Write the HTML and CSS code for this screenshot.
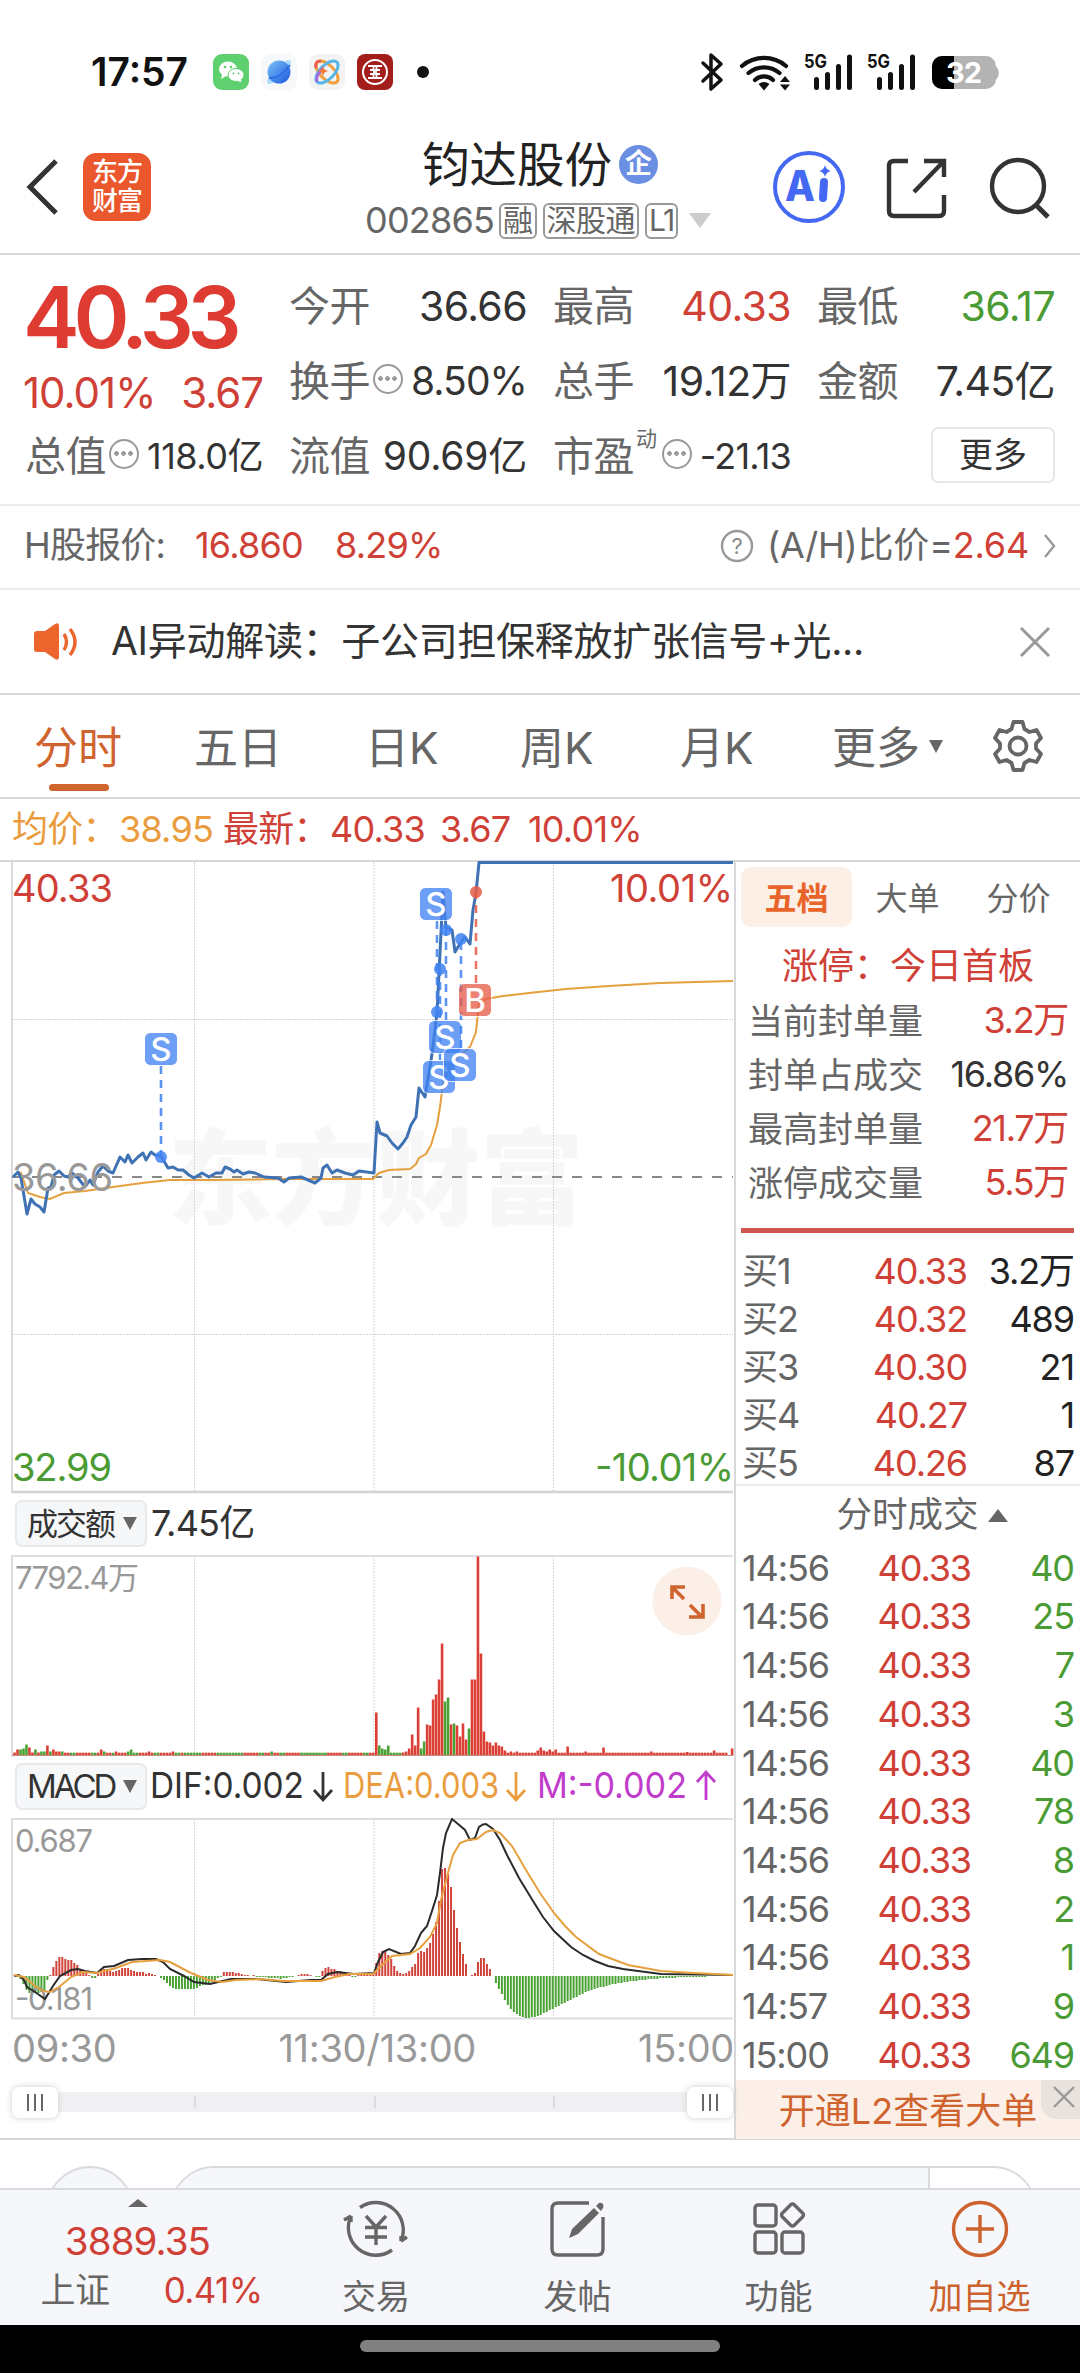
FILE: index.html
```html
<!DOCTYPE html>
<html lang="zh-CN">
<head>
    <meta charset="UTF-8">
    <meta name="viewport" content="width=device-width, initial-scale=1.0">
    <title>钧达股份 002865</title>
    <link rel="stylesheet" href="styles.css">
</head>
<body>
    <!-- Status bar -->
    <div class="status-bar">
        <span class="time">17:57</span>
        <svg class="app-icon" viewBox="0 0 36 36">
            <rect width="36" height="36" rx="9" fill="#5fd070"/>
            <ellipse cx="15" cy="15" rx="9" ry="7.5" fill="#fff"/>
            <path d="M9 20l-1 5 5-3z" fill="#fff"/>
            <ellipse cx="23" cy="21" rx="8" ry="6.5" fill="#fff" stroke="#5fd070" stroke-width="1"/>
            <path d="M27 25l2 3-5-1z" fill="#fff"/>
            <g fill="#5fd070"><circle cx="12" cy="13" r="1.3"/><circle cx="18" cy="13" r="1.3"/><circle cx="20.500" cy="19.500" r="1"/><circle cx="25.500" cy="19.500" r="1"/></g>
        </svg>
        <svg class="app-icon" viewBox="0 0 36 36">
            <defs><linearGradient id="planet" x1="0" y1="0" x2="1" y2="1"><stop offset="0" stop-color="#7cc6fb"/><stop offset="1" stop-color="#1c55d8"/></linearGradient></defs>
            <rect width="36" height="36" rx="9" fill="#f7f8fa"/>
            <ellipse cx="18" cy="18" rx="16" ry="5" transform="rotate(-45 18 18)" fill="#a9dcfb"/>
            <circle cx="18" cy="18" r="11.500" fill="url(#planet)"/>
            <path d="M8 24c8 1 16-6 21-13" stroke="#2a6fe5" stroke-width="2" fill="none"/>
        </svg>
        <svg class="app-icon" viewBox="0 0 36 36">
            <rect width="36" height="36" rx="9" fill="#f3f3f3"/>
            <g fill="none" stroke-width="3">
                <ellipse cx="18" cy="18" rx="14" ry="7" transform="rotate(45 18 18)" stroke="#f0a03a"/>
                <ellipse cx="18" cy="18" rx="14" ry="7" transform="rotate(-45 18 18)" stroke="#57b6e8"/>
                <path d="M7 14c-1-5 1-7 5-7" stroke="#ef5a50"/><path d="M8 28c-1-4 1-9 6-14" stroke="#a46be0"/>
            </g>
            <path d="M14 12l1.500 3.500L19 17l-3.500 1.500L14 22l-1.500-3.500L9 17l3.500-1.500z" fill="#ef7a3c"/>
        </svg>
        <svg class="app-icon" viewBox="0 0 36 36">
            <rect width="36" height="36" rx="8" fill="#a31d1b"/>
            <circle cx="18" cy="18" r="12" fill="none" stroke="#fff" stroke-width="2"/>
            <path d="M11 12h14M11 24h14M13 16h4v4h-4M23 16h-4v4h4M16.500 12v4M19.500 12v4M16.500 20v4M19.500 20v4" stroke="#fff" stroke-width="1.800" fill="none"/>
        </svg>
        <span class="dot"></span>
        <svg class="status-right" width="300" height="40" viewBox="0 0 300 40">
            <path d="M3 11l18 17-10 9V3l10 9L3 29" fill="none" stroke="#111" stroke-width="3.500" stroke-linejoin="round" stroke-linecap="round"/>
            <g fill="none" stroke="#111" stroke-width="4.200" stroke-linecap="round">
                <path d="M42 14a34 34 0 0 1 44 0"/><path d="M48.500 21a24 24 0 0 1 31 0"/><path d="M55 28a13 13 0 0 1 18 0"/>
            </g>
            <path d="M58.500 32a9 9 0 0 1 11 0l-5.500 6.500zM80 30l5-6 5 6zM80 32.500l5 6 5-6z" fill="#111"/>
            <g font-size="19" font-weight="700" fill="#111">
                <text x="104" y="16" textLength="23" lengthAdjust="spacingAndGlyphs">5G</text>
                <text x="167" y="16" textLength="23" lengthAdjust="spacingAndGlyphs">5G</text>
            </g>
            <g stroke="#111" stroke-width="5" stroke-linecap="round">
                <path d="M116.500 27.500v8M127.500 22.500v13M138.500 14.500v21M149.500 5v30.500"/>
                <path d="M179.500 27.500v8M190.500 22.500v13M201.500 14.500v21M212.500 5v30.500"/>
            </g>
            <rect x="232" y="4" width="64" height="33" rx="10" fill="#b3b3b3"/>
            <path d="M295 14c5 2 5 12 0 14z" fill="#b3b3b3"/>
            <path d="M254 4h-12a10 10 0 0 0-10 10v13a10 10 0 0 0 10 10h12z" fill="#000"/>
            <text x="246" y="31" font-size="29" font-weight="700" fill="#fff" textLength="36">32</text>
        </svg>
    </div>

    <!-- Header -->
    <div class="header">
        <svg class="back" width="36" height="60" viewBox="0 0 36 60"><path d="M31 4L5 30l26 26" fill="none" stroke="#333" stroke-width="5"/></svg>
        <div class="logo">东方<br>财富</div>
        <div class="title-box">
            <div class="title">钧达股份<span class="corp">企</span></div>
            <div class="subtitle"><span class="code">002865</span><span class="tag">融</span><span class="tag">深股通</span><span class="tag level">L1</span><i class="tri-down pale"></i></div>
        </div>
        <svg class="header-icons" width="290" height="76" viewBox="0 0 290 76">
            <circle cx="42" cy="38" r="34" fill="none" stroke="#4468f2" stroke-width="4"/>
            <text x="18" y="52" font-size="42" font-weight="800" fill="#4468f2" textLength="30" lengthAdjust="spacingAndGlyphs">A</text>
            <path d="M57 33l-1 16" stroke="#4468f2" stroke-width="8" stroke-linecap="round"/>
            <path d="M58 16q1 5 6 6-5 1-6 6-1-5-6-6 5-1 6-6z" fill="#4468f2"/>
            <path d="M141 12h-14q-5 0-5 5v45q0 5 5 5h45q5 0 5-5V46M177 28V12h-20M177 12l-30 31" fill="none" stroke="#333" stroke-width="4.400"/>
            <circle cx="251" cy="37" r="26" fill="none" stroke="#333" stroke-width="4.400"/>
            <path d="M269 56l12 12" stroke="#333" stroke-width="5"/>
        </svg>
    </div>

    <!-- Quote figures -->
    <div class="quote">
        <div class="col first">
            <div class="price">40.33</div>
            <div class="change"><span>10.01%</span><span>3.67</span></div>
            <div class="row small"><label>总值</label><i class="info"></i><b class="cap">118.0亿</b></div>
        </div>
        <div class="col">
            <div class="row"><label>今开</label><b>36.66</b></div>
            <div class="row mid"><label>换手</label><i class="info"></i><b>8.50%</b></div>
            <div class="row mid"><label>流值</label><b class="float">90.69亿</b></div>
        </div>
        <div class="col">
            <div class="row"><label>最高</label><b class="red">40.33</b></div>
            <div class="row"><label>总手</label><b>19.12万</b></div>
            <div class="row small"><label>市盈</label><sup>动</sup><i class="info"></i><b>-21.13</b></div>
        </div>
        <div class="col">
            <div class="row"><label>最低</label><b class="green">36.17</b></div>
            <div class="row"><label>金额</label><b>7.45亿</b></div>
            <div class="row"><button class="more">更多</button></div>
        </div>
    </div>

    <div class="h-share">
        <span class="h-label">H股报价:</span><span class="red h-price">16.860</span><span class="red">8.29%</span>
        <div class="ratio">
            <svg width="34" height="34" viewBox="0 0 34 34"><circle cx="17" cy="17" r="15" fill="none" stroke="#999" stroke-width="2.400"/><text x="17" y="25" text-anchor="middle" font-size="22" fill="#888">?</text></svg>
            <span>(A/H)比价=<em class="red">2.64</em></span>
            <svg width="12" height="24" viewBox="0 0 12 24"><path d="M1 1l9 11-9 11" fill="none" stroke="#999" stroke-width="2.400"/></svg>
        </div>
    </div>

    <div class="ai-news">
        <svg width="46" height="38" viewBox="0 0 46 38">
            <path d="M1 11q0-3 3-3h8L22 1q4-2 4 2v31q0 4-4 2l-10-7H4q-3 0-3-3z" fill="#ec652d"/>
            <path d="M31 11q5 8 0 16" fill="none" stroke="#ec652d" stroke-width="3.400"/><path d="M37 6q10 13 0 26" fill="none" stroke="#ec652d" stroke-width="3.400"/>
        </svg>
        <span class="news-text">AI异动解读：子公司担保释放扩张信号+光...</span>
        <svg width="32" height="32" viewBox="0 0 32 32"><path d="M2 2l28 28M30 2L2 30" stroke="#999" stroke-width="3"/></svg>
    </div>

    <!-- Period tabs -->
    <div class="tabs">
        <span class="tab active">分时</span>
        <span class="tab">五日</span>
        <span class="tab">日K</span>
        <span class="tab">周K</span>
        <span class="tab">月K</span>
        <span class="tab">更多<i class="tri-down tiny"></i></span>
        <svg class="gear" width="54" height="54" viewBox="0 0 54 54">
            <path d="M22.500 3h9l2 7 5 3 7-2 4.500 8-5 5.500v5l5 5.500-4.500 8-7-2-5 3-2 7h-9l-2-7-5-3-7 2L4 35l5-5.500v-5L4 19l4.500-8 7 2 5-3z" fill="none" stroke="#666" stroke-width="3.800" stroke-linejoin="round"/>
            <circle cx="27" cy="27" r="8.500" fill="none" stroke="#666" stroke-width="3.800"/>
        </svg>
    </div>

    <div class="legend">
        <span class="orange l1">均价：</span><span class="orange l2">38.95</span><span class="red l3">最新：</span><span class="red l4">40.33</span><span class="red l5">3.67</span><span class="red">10.01%</span>
    </div>

    <div class="main">
        <!-- Charts -->
        <div class="charts">
            <svg class="price-chart" width="735" height="634" viewBox="0 0 735 634">
                <text class="watermark" x="168" y="357" textLength="416">东方财富</text>
                <g class="grid">
                    <path d="M194.500 2v631M374 2v631M553.500 2v631M12 159.500h721M12 474.500h721"/>
                </g>
                <path d="M12 2v631" stroke="#d9d9de" stroke-width="2"/>
                <path d="M12 632h721" stroke="#d3d3d6" stroke-width="2.500"/>
                <path d="M12 317h721" stroke="#888" stroke-width="2" stroke-dasharray="10 10"/>
                <polyline class="avg" points="18,312 21,313 28,333 40,337 50,339 64,333 85,331 113,327 142,323 170,320 212,320 283,319 373,319 379,313 389,310 410,309 416,304 419,298 426,294 431,285 437,265 440,247 443,223 448,210 458,197 470,187 476,172 479,143 486,139 503,136 529,133 566,129 609,126 660,123 733,121"/>
                <polyline class="last" points="13,317 18,312 21,318 27,354 31,339 35,344 40,347 44,352 48,328 51,327 54,315 59,311 64,316 68,317 72,313 78,318 85,327 90,320 93,325 98,312 103,306 108,311 113,313 120,297 125,302 128,295 132,303 138,297 143,293 146,300 151,292 155,295 161,296 168,308 173,307 178,310 183,310 189,315 194,318 202,313 209,317 216,313 222,313 225,307 230,309 234,312 237,310 243,314 249,312 255,313 264,317 278,318 284,322 289,318 301,317 315,323 321,318 323,308 327,305 332,313 337,310 345,313 353,315 359,311 374,313 377,262 380,273 387,276 392,283 398,289 403,283 407,277 411,265 416,257 419,228 425,237 432,194 437,153 439,113 443,32 446,68 452,70 455,92 461,82 465,77 470,84 473,50 476,33 479,2.500 733,2.500"/>
                <g class="pins" id="pins"></g>
                <g font-size="38">
                    <text x="12" y="42" fill="#cf4036" textLength="101">40.33</text>
                    <text x="610" y="42" fill="#cf4036" textLength="123">10.01%</text>
                    <text x="12" y="331" fill="#999" textLength="101">36.66</text>
                    <text x="12" y="621" fill="#4b9b35" textLength="100">32.99</text>
                    <text x="595" y="621" fill="#4b9b35" textLength="139">-10.01%</text>
                </g>
            </svg>

            <div class="indicator">
                <span class="select">成交额<i class="tri-down"></i></span><span class="turnover">7.45亿</span>
            </div>

            <svg class="volume-chart" width="735" height="202" viewBox="0 0 735 202">
                <g class="grid"><path d="M194.500 1v200M374 1v200M553.500 1v200"/></g>
                <path d="M12 202V1h721" fill="none" stroke="#dedee2" stroke-width="2"/>
                <g id="volume"></g>
                <path d="M12 200.500h721" stroke="#c98b80"/>
                <text x="15" y="34" font-size="31" fill="#999" textLength="124">7792.4万</text>
                <circle cx="687" cy="46" r="34.500" fill="#fbefe7"/>
                <path d="M672 44V32h13M672 32l12 12M690 50l12 12M703 49v13h-14" fill="none" stroke="#d0642e" stroke-width="3.600"/>
            </svg>

            <div class="indicator macd">
                <span class="select">MACD<i class="tri-down"></i></span>
                <svg width="585" height="48" viewBox="0 0 585 48">
                    <g font-size="36">
                        <text x="3" y="35" fill="#333" textLength="154" lengthAdjust="spacingAndGlyphs">DIF:0.002</text>
                        <text x="196" y="35" fill="#e99d3e" textLength="156" lengthAdjust="spacingAndGlyphs">DEA:0.003</text>
                        <text x="390" y="35" fill="#c13ccb" textLength="150" lengthAdjust="spacingAndGlyphs">M:-0.002</text>
                    </g>
                    <g fill="none" stroke-width="2.800">
                        <path d="M176 9v27M167 27l9 10 9-10" stroke="#333"/>
                        <path d="M369 9v27M360 27l9 10 9-10" stroke="#e99d3e"/>
                        <path d="M559 37V10M550 19l9-10 9 10" stroke="#c13ccb"/>
                    </g>
                </svg>
            </div>

            <svg class="macd-chart" width="735" height="202" viewBox="0 0 735 202">
                <g class="grid"><path d="M194.500 1v200M374 1v200M553.500 1v200"/></g>
                <path d="M733 1H12v199.500h721" fill="none" stroke="#dedee2" stroke-width="2"/>
                <g id="macd"></g>
                <g font-size="31" fill="#999"><text x="15" y="34" textLength="78">0.687</text><text x="15" y="192" textLength="78">-0.181</text></g>
                <polyline class="dif" points="14,158 19,157 24,162 27,169 35,174 45,181 53,168 60,158 71,152 78,151 85,153 97,155 104,149 114,148 128,142 142,141 156,141 163,144 170,151 184,158 194,164 210,166 231,161 257,161 286,164 311,162 321,162 328,156 337,154 354,156 374,155 378,144 383,134 389,131 401,136 410,135 415,128 421,115 427,108 432,93 437,77 440,55 443,30 446,15 452,1 458,6 465,12 470,22 475,20 479,9 483,6.500 486,6 493,11 500,22 507,37 519,60 533,83 543,99 554,113 571,129 583,137 595,143 608,148 623,151 661,156 733,157"/>
                <polyline class="dea" points="14,157 24,159 35,168 43,173 50,174 59,169 71,159 83,154 97,155 116,150 132,144 160,142 170,144 189,154 208,162 222,164 236,162 260,161 283,163 321,163 335,159 349,156 373,156 380,149 392,138 410,136 420,130 430,119 437,105 441,82 448,55 453,37 460,25 468,22 477,21 486,14 493,12 500,15 512,28 526,52 540,75 554,95 565,108 576,119 599,136 628,147 661,153 694,155 733,157"/>
            </svg>

            <div class="time-axis"><span>09:30</span><span>11:30/13:00</span><span>15:00</span></div>

            <div class="slider">
                <span class="handle"><i></i><i></i><i></i></span>
                <div class="track"><i></i><i></i><i></i></div>
                <span class="handle"><i></i><i></i><i></i></span>
            </div>
        </div>

        <!-- Order book -->
        <div class="side">
            <div class="side-tabs"><span class="on">五档</span><span>大单</span><span>分价</span></div>
            <div class="limit-title">涨停：今日首板</div>
            <div class="stats">
                <div><span>当前封单量</span><b class="red">3.2万</b></div>
                <div><span>封单占成交</span><b>16.86%</b></div>
                <div><span>最高封单量</span><b class="red">21.7万</b></div>
                <div><span>涨停成交量</span><b class="red">5.5万</b></div>
            </div>
            <div class="split"></div>
            <div class="bids">
                <div class="line"><span>买1</span><span class="red">40.33</span><b>3.2万</b></div>
                <div class="line"><span>买2</span><span class="red">40.32</span><b>489</b></div>
                <div class="line"><span>买3</span><span class="red">40.30</span><b>21</b></div>
                <div class="line"><span>买4</span><span class="red">40.27</span><b>1</b></div>
                <div class="line"><span>买5</span><span class="red">40.26</span><b>87</b></div>
            </div>
            <div class="ticks-title">分时成交<i class="tri-up"></i></div>
            <div class="ticks">
                <div class="line"><span>14:56</span><span class="red">40.33</span><b class="green">40</b></div>
                <div class="line"><span>14:56</span><span class="red">40.33</span><b class="green">25</b></div>
                <div class="line"><span>14:56</span><span class="red">40.33</span><b class="green">7</b></div>
                <div class="line"><span>14:56</span><span class="red">40.33</span><b class="green">3</b></div>
                <div class="line"><span>14:56</span><span class="red">40.33</span><b class="green">40</b></div>
                <div class="line"><span>14:56</span><span class="red">40.33</span><b class="green">78</b></div>
                <div class="line"><span>14:56</span><span class="red">40.33</span><b class="green">8</b></div>
                <div class="line"><span>14:56</span><span class="red">40.33</span><b class="green">2</b></div>
                <div class="line"><span>14:56</span><span class="red">40.33</span><b class="green">1</b></div>
                <div class="line"><span>14:57</span><span class="red">40.33</span><b class="green">9</b></div>
                <div class="line"><span>15:00</span><span class="red">40.33</span><b class="green">649</b></div>
            </div>
            <div class="l2-banner">开通L2查看大单
                <span class="close"><svg width="24" height="24" viewBox="0 0 24 24"><path d="M2 2l20 20M22 2L2 22" stroke="#999" stroke-width="2.400"/></svg></span>
            </div>
        </div>
    </div>

    <!-- Top of the next section, cut by the bottom bar -->
    <div class="peek"><span class="avatar"></span><div class="pill"><span></span></div></div>

    <!-- Bottom bar -->
    <div class="bottom-bar">
        <div class="index">
            <i class="tri-up small"></i>
            <div class="points">3889.35</div>
            <div class="index-row"><span>上证</span><span class="red">0.41%</span></div>
        </div>
        <div class="nav">
            <svg width="66" height="62" viewBox="0 0 66 62">
                <g fill="none" stroke="#666" stroke-width="3.400">
                    <path d="M17 9.500A27.500 27.500 0 0 1 58 43v-5M58 43l6-4"/><path d="M49 52A27.500 27.500 0 0 1 8 18v6M8 18l-7 4"/>
                    <path d="M23 18l10 11 10-11M22 29.500h22M22 39h22M33 28v19"/>
                </g>
            </svg>
            <span>交易</span>
        </div>
        <div class="nav">
            <svg width="66" height="62" viewBox="0 0 66 62">
                <path d="M44 5H13q-6 0-6 6v40q0 6 6 6h39q6 0 6-6V19" fill="none" stroke="#666" stroke-width="3.400"/>
                <path d="M24 40l3-9L49 10l5 5-21 21zM51 8l3-3q2-1 4 1 1 2 0 4l-2 3z" fill="#666"/>
            </svg>
            <span>发帖</span>
        </div>
        <div class="nav">
            <svg width="66" height="62" viewBox="0 0 66 62">
                <g fill="none" stroke="#666" stroke-width="3.400">
                    <rect x="9" y="7" width="21" height="21" rx="3"/><rect x="9" y="34" width="21" height="21" rx="3"/><rect x="36" y="34" width="21" height="21" rx="3"/>
                    <rect x="38" y="8.500" width="17" height="17" rx="2.500" transform="rotate(45 46.500 17)"/>
                </g>
            </svg>
            <span>功能</span>
        </div>
        <div class="nav add">
            <svg width="66" height="62" viewBox="0 0 66 62">
                <g fill="none" stroke="#cc622e" stroke-width="3.400"><circle cx="33" cy="31" r="26.500"/><path d="M33 17v28M19 31h28"/></g>
            </svg>
            <span>加自选</span>
        </div>
    </div>
    <div class="home"><span></span></div>

    <script src="script.js"></script>
</body>
</html>
```

FILE: styles.css
```css
* {
    box-sizing: border-box;
}

body {
    margin: 0;
    width: 1080px;
    height: 2373px;
    overflow: hidden;
    background-color: #fff;
    color: #333;
    font-family: Inter, "Noto Sans CJK SC", sans-serif;
    line-height: 1.2;
    display: flex;
    flex-direction: column;
}

b, em, i {
    font-weight: normal;
    font-style: normal;
}

svg {
    display: block;
    flex: none;
}

svg text {
    font-family: Inter, "Noto Sans CJK SC", sans-serif;
}

.red { color: #cf4036; }
.green { color: #4b9b35; }
.orange { color: #e99d3e; }

.tri-down {
    display: inline-block;
    border-left: 7px solid transparent;
    border-right: 7px solid transparent;
    border-top: 13px solid #666;
}

.tri-up {
    display: inline-block;
    border-left: 10px solid transparent;
    border-right: 10px solid transparent;
    border-bottom: 13px solid #666;
}

/* Status bar */
.status-bar {
    height: 137px;
    padding: 7px 80px 0 91px;
    display: flex;
    align-items: center;
}

.time {
    width: 122px;
    font-size: 39px;
    font-weight: 600;
    color: #111;
}

.app-icon {
    width: 36px;
    height: 36px;
    margin-right: 12px;
}

.dot {
    width: 12px;
    height: 12px;
    margin-left: 12px;
    border-radius: 50%;
    background-color: #111;
}

.status-right {
    margin-left: auto;
}

/* Header */
.header {
    height: 118px;
    border-bottom: 2px solid #d8d8d8;
    display: flex;
    align-items: flex-start;
}

.back {
    margin: 20px 0 0 25px;
}

.logo {
    width: 68px;
    height: 68px;
    margin: 16px 0 0 22px;
    padding-top: 4px;
    border-radius: 13px;
    background-color: #ea572c;
    color: #fff;
    font-size: 26px;
    font-weight: 500;
    line-height: 29px;
    text-align: center;
    letter-spacing: -1px;
}

.title-box {
    width: 611px;
    padding-left: 214px;
}

.title {
    height: 55px;
    padding-left: 57px;
    display: flex;
    align-items: center;
    font-size: 47.5px;
    color: #222;
    white-space: nowrap;
}

.corp {
    width: 39px;
    height: 39px;
    margin-left: 7px;
    border-radius: 50%;
    background-color: #6b8fe3;
    color: #fff;
    font-size: 27px;
    font-weight: 700;
    line-height: 37px;
    text-align: center;
}

.subtitle {
    height: 57px;
    display: flex;
    align-items: center;
    color: #666;
}

.code {
    width: 134px;
    font-size: 36px;
    letter-spacing: -0.8px;
}

.tag {
    height: 36px;
    margin-right: 6px;
    padding: 0 2px;
    border: 2px solid #999;
    border-radius: 6px;
    font-size: 30px;
    line-height: 31px;
    letter-spacing: -0.5px;
}

.tag.level {
    letter-spacing: -1.6px;
}

.tri-down.pale {
    margin-left: 5px;
    border-left-width: 11px;
    border-right-width: 11px;
    border-top: 15px solid #ccc;
}

.header-icons {
    margin: 12px 0 0 5px;
}

/* Quote */
.quote {
    height: 251px;
    padding: 14px 24px 0 25px;
    border-bottom: 2px solid #ececee;
    display: grid;
    grid-template-columns: repeat(4, 238px);
    column-gap: 26px;
}

.row {
    height: 75px;
    display: flex;
    align-items: center;
    white-space: nowrap;
}

.row label {
    color: #666;
    font-size: 41px;
    letter-spacing: -0.5px;
}

.row b {
    margin-left: auto;
    font-size: 41px;
    letter-spacing: -0.6px;
}

.row.mid b {
    font-size: 39px;
    letter-spacing: -0.9px;
}

.row.mid b.float {
    letter-spacing: -0.2px;
}

.row.small b {
    font-size: 36px;
    letter-spacing: -0.8px;
}

.row.small b.cap {
    letter-spacing: -0.5px;
}

.row sup {
    width: 23px;
    margin: 0 0 36px 2px;
    font-size: 21px;
    line-height: 24px;
    color: #666;
}

.info {
    width: 30px;
    height: 30px;
    margin: 0 0 6px 3px;
    flex: none;
    border: 2.5px solid #999;
    border-radius: 50%;
    background: radial-gradient(circle, #999 2px, transparent 2.6px) 0 0 / 7px 25px no-repeat,
        radial-gradient(circle, #999 2px, transparent 2.6px) 9px 0 / 7px 25px no-repeat,
        radial-gradient(circle, #999 2px, transparent 2.6px) 18px 0 / 7px 25px no-repeat;
    background-position: 2px 0, 9px 0, 16px 0;
}

.price {
    height: 98px;
    margin-left: -2px;
    color: #de3b33;
    font-size: 85px;
    font-weight: 600;
    line-height: 98px;
    letter-spacing: -6.2px;
}

.change {
    height: 52px;
    display: flex;
    justify-content: space-between;
    align-items: center;
    color: #cf4036;
    font-size: 42px;
    letter-spacing: -1px;
}

.change span:first-child {
    margin-left: -2px;
}

.more {
    width: 124px;
    height: 56px;
    margin: -4px 0 0 auto;
    padding: 0;
    border: 2px solid #e6e7ea;
    border-radius: 7px;
    background-color: #fff;
    color: #333;
    font: inherit;
    font-size: 34px;
    line-height: 52px;
}

.h-share {
    height: 84px;
    padding: 0 24px 2px 24px;
    border-bottom: 2px solid #ececee;
    display: flex;
    align-items: center;
    font-size: 36px;
    letter-spacing: -0.8px;
    color: #666;
}

.h-label {
    width: 171px;
}

.h-price {
    width: 140px;
}

.ratio {
    margin-left: auto;
    display: flex;
    align-items: center;
    letter-spacing: -0.2px;
}

.ratio span {
    width: 259px;
    margin: 0 18px 0 13px;
    white-space: nowrap;
}

.ai-news {
    height: 105px;
    padding: 0 29px 0 33px;
    border-bottom: 2px solid #d8d8d8;
    display: flex;
    align-items: center;
}

.news-text {
    margin: 0 auto 0 32px;
    font-size: 39px;
    letter-spacing: -0.3px;
}

/* Tabs */
.tabs {
    height: 104px;
    padding-left: 34px;
    border-bottom: 2px solid #d8d8d8;
    display: grid;
    grid-template-columns: 160px 171px 155px 160px 152px 159px 60px;
    align-items: center;
    color: #666;
    font-size: 44px;
    white-space: nowrap;
}

.tab {
    height: 102px;
    line-height: 106px;
}

.tab.active {
    color: #d0642e;
}

.tab.active::after {
    content: "";
    display: block;
    width: 60px;
    height: 7px;
    margin: -17px 0 0 15px;
    border-radius: 4px;
    background-color: #d0642e;
}

.tri-down.tiny {
    margin: 0 0 11px 9px;
}

.legend {
    height: 61px;
    padding-left: 12px;
    display: flex;
    align-items: center;
    font-size: 36px;
    letter-spacing: -0.8px;
}

.l1, .l3 { width: 107px; }
.l2 { width: 104px; }
.l4 { width: 110px; }
.l5 { width: 88px; }

/* Charts */
.main {
    height: 1280px;
    border-top: 2px solid #d8d8d8;
    border-bottom: 2px solid #d8d8d8;
    display: flex;
}

.charts {
    width: 736px;
    border-right: 2px solid #d8d8da;
}

/* the plot begins on the top border itself */
.price-chart {
    margin-top: -2px;
}

.grid path {
    fill: none;
    stroke: #d6d6d8;
    stroke-dasharray: 2 1;
}

.watermark {
    font-size: 104px;
    font-weight: 900;
    fill: #f7f7f7;
}

.avg, .dea {
    fill: none;
    stroke: #e6a03f;
    stroke-width: 2;
}

.last {
    fill: none;
    stroke: #3f72b4;
    stroke-width: 3;
    stroke-linejoin: round;
}

.dif {
    fill: none;
    stroke: #2b2b2b;
    stroke-width: 2;
}

.pins text {
    font-size: 33px;
    font-weight: 500;
    fill: #fff;
    text-anchor: middle;
}

.indicator {
    height: 61px;
    padding: 6px 0 0 15px;
    display: flex;
    align-items: flex-start;
}

.select {
    width: 132px;
    height: 47px;
    padding: 0 8px 0 10px;
    border: 2px solid #e8e9ec;
    border-radius: 7px;
    background-color: #f6f7f9;
    display: flex;
    align-items: center;
    justify-content: space-between;
    font-size: 31px;
    letter-spacing: -2px;
}

.turnover {
    margin-left: 4px;
    font-size: 36px;
    line-height: 46px;
    letter-spacing: -0.8px;
}

.macd .select {
    font-size: 33px;
    letter-spacing: -3px;
}

.time-axis {
    height: 57px;
    padding: 0 0 0 12px;
    display: flex;
    justify-content: space-between;
    align-items: center;
    font-size: 38px;
    color: #999;
    letter-spacing: -0.3px;
}

.slider {
    height: 50px;
    padding-left: 12px;
    display: flex;
    align-items: center;
}

.handle {
    width: 46px;
    height: 31px;
    border-radius: 7px;
    background-color: #fff;
    box-shadow: 0 0 6px #ccc;
    display: flex;
    justify-content: center;
    align-items: center;
    gap: 5px;
    z-index: 1;
}

.handle i {
    width: 2px;
    height: 17px;
    background-color: #666;
}

.track {
    width: 629px;
    height: 20px;
    padding: 0 132px 0 136px;
    background-color: #f0f0f2;
    display: flex;
    justify-content: space-between;
    align-items: center;
}

.track i {
    width: 2px;
    height: 12px;
    background-color: #dcdce0;
}

/* Order book */
.side {
    flex: 1;
    display: flex;
    flex-direction: column;
}

.side > div {
    flex-shrink: 0;
}

.side-tabs {
    height: 72px;
    padding: 5px 0 0 5px;
    display: flex;
    font-size: 32px;
    color: #666;
}

.side-tabs span {
    width: 111px;
    height: 60px;
    line-height: 63px;
    text-align: center;
}

.side-tabs .on {
    border-radius: 10px;
    background-color: #fbefe6;
    color: #e8642a;
    font-weight: 700;
}

.limit-title {
    height: 60px;
    color: #cf4036;
    font-size: 36px;
    line-height: 64px;
    text-align: center;
}

.stats {
    height: 234px;
    padding: 0 12px 0 12px;
}

.stats div {
    height: 54px;
    display: flex;
    justify-content: space-between;
    align-items: center;
}

.stats span {
    font-size: 35px;
    color: #666;
}

.stats b {
    font-size: 36px;
    letter-spacing: -1.3px;
}

.split {
    height: 5px;
    margin: 0 6px 0 5px;
    background-color: #cd5850;
}

.bids {
    height: 253px;
    padding-top: 15px;
    border-bottom: 2px solid #ececee;
}

.line {
    height: 48px;
    padding: 0 6px 0 6px;
    display: grid;
    grid-template-columns: 112px 113px 1fr;
    align-items: center;
    font-size: 36px;
    letter-spacing: -1.1px;
    color: #666;
}

.line span + span {
    text-align: right;
}

.line .red {
    color: #cf4036;
}

.line b {
    text-align: right;
    color: #222;
}

.line b.green {
    color: #4b9b35;
}

.ticks-title {
    height: 58px;
    display: flex;
    justify-content: center;
    align-items: center;
    gap: 9px;
    padding-left: 28px;
    font-size: 35.5px;
    color: #666;
}

.ticks .line {
    height: 48.7px;
    grid-template-columns: 112px 117px 1fr;
}

.l2-banner {
    height: 59px;
    position: relative;
    background-color: #fbefe8;
    color: #d0642e;
    font-size: 36px;
    line-height: 62px;
    text-align: center;
    overflow: hidden;
}

.close {
    position: absolute;
    top: 0;
    right: 0;
    width: 39px;
    height: 39px;
    padding: 5px 0 0 11px;
    border-bottom-left-radius: 16px;
    background-color: #eae2dd;
}

/* Peek */
.peek {
    height: 48px;
    padding: 26px 43px 0 46px;
    display: flex;
    overflow: hidden;
}

.avatar {
    width: 88px;
    height: 88px;
    flex: none;
    border: 2px solid #d8dade;
    border-radius: 50%;
    background-color: #f6f7fa;
}

.pill {
    flex: 1;
    height: 88px;
    margin-left: 36px;
    border: 2px solid #d8dade;
    border-radius: 44px;
    overflow: hidden;
}

.pill span {
    display: block;
    width: 758px;
    height: 86px;
    border-right: 2px solid #d8dade;
    background-color: #f6f7fa;
}

/* Bottom bar */
.bottom-bar {
    height: 137px;
    border-top: 2px solid #d8dadd;
    background-color: #f6f7fa;
    display: grid;
    grid-template-columns: 275px 202px 201px 201px 201px;
}

.index {
    display: flex;
    flex-direction: column;
    align-items: center;
    color: #666;
}

.tri-up.small {
    margin-top: 9px;
    border-bottom-width: 8px;
}

.points {
    height: 68px;
    color: #cf4036;
    font-size: 38.5px;
    line-height: 68px;
    letter-spacing: -0.9px;
}

.index-row {
    width: 222px;
    height: 30px;
    display: flex;
    justify-content: space-between;
    align-items: center;
    margin-left: 28px;
    font-size: 35px;
    letter-spacing: -0.6px;
}

.nav {
    padding-top: 8px;
    display: flex;
    flex-direction: column;
    align-items: center;
    color: #666;
    font-size: 34px;
}

.nav span {
    height: 65px;
    line-height: 73px;
}

.nav.add {
    color: #cc622e;
}

.home {
    height: 48px;
    padding-top: 15px;
    background-color: #000;
}

.home span {
    display: block;
    width: 360px;
    height: 12px;
    margin: 0 auto;
    border-radius: 7px;
    background-color: #808080;
}
```

FILE: script.js
```js
const SVG = "http://www.w3.org/2000/svg";
const RED = "#dc3f36";
const GREEN = "#4ba234";

function add(parent, tag, attrs, text) {
    const el = document.createElementNS(SVG, tag);
    for (const key in attrs) el.setAttribute(key, attrs[key]);
    if (text) el.textContent = text;
    parent.appendChild(el);
    return el;
}

// one slot per minute
function slotX(i) {
    return 14.5 + i * 2.99;
}

// trade markers: letter, box centre, point on the line
const pins = [
    ["S", 161, 189, 161, 297],
    ["S", 436, 44, 437, 152],
    ["S", 439, 217, 440, 109],
    ["S", 445, 177, 446, 70],
    ["S", 460, 205, 461, 79],
    ["B", 475, 140, 476, 32]
];
const pinLayer = document.getElementById("pins");
pins.forEach(([letter, x, y, px, py]) => {
    const color = letter === "S" ? "#3f82f2" : "#e65c48";
    const edge = y < py ? y + 17 : y - 17;
    add(pinLayer, "path", { d: `M${px} ${edge}V${py}`, stroke: color, "stroke-width": 2.6, "stroke-dasharray": "8 6", opacity: 0.85 });
    add(pinLayer, "circle", { cx: px, cy: py, r: 6, fill: color, opacity: 0.85 });
    add(pinLayer, "rect", { x: x - 16.5, y: y - 16.5, width: 33, height: 33, rx: 6, fill: color, stroke: "#fff", opacity: 0.76 });
    add(pinLayer, "text", { x: x, y: y + 12 }, letter);
});

// volume: positive is a red bar, negative a green one
const volume = {
    0: 3, 1: 6, 2: -6, 3: -7, 4: -11, 5: 8, 6: 3, 7: -6, 8: 3, 9: -4, 10: -4, 11: 10, 12: -4, 13: 6, 14: 4, 15: 4, 16: -4,
    29: 6, 30: -4, 34: 4, 38: -4, 39: -6, 45: 4, 53: 4, 86: -4,
    121: 43, 122: -10, 123: -7, 124: -6, 125: -10, 130: 3, 131: 4, 132: 7, 133: 21, 134: 10, 135: 48, 136: -7, 137: -14,
    138: 31, 139: 30, 140: 56, 141: 61, 142: 76, 143: 112, 144: -54, 145: -58, 146: 31, 147: -32, 148: 30, 149: 19,
    150: 32, 151: 16, 152: -27, 153: 76, 154: 76, 155: 199, 156: 102, 157: 24, 158: 14, 159: 13, 160: 10, 161: 13,
    162: 10, 163: 9, 164: 5, 166: 4, 168: 4, 175: 5, 176: 8, 177: 5, 178: 4, 179: 6, 180: 4, 181: 6, 185: 9, 191: 4,
    197: 8, 213: 4, 225: 3.5, 234: 5, 240: 7
};
const volumeLayer = document.getElementById("volume");
for (let i = 0; i <= 240; i++) {
    if (i === 239) continue;
    let v = volume[i];
    if (v === undefined) {
        const falling = (i < 121 && (i % 7 > 4 || (i > 56 && i < 61) || (i > 67 && i < 76) || (i > 97 && i < 103))) || (i > 125 && i < 130);
        v = falling ? -2.8 : 2.8;
    }
    const h = Math.abs(v);
    add(volumeLayer, "rect", { x: slotX(i) - 1.3, y: 200.5 - h, width: 2.6, height: h, fill: v > 0 ? RED : GREEN });
}

const macd = [
    1, -1, -3, -8, -14, -17, -17, -17, -17, -16, -15, -4, 1, 9, 15, 19, 19, 17, 16, 16, 13, 11, 6, 5, 3, 1, -2, -2, 2, 6,
    7, 7, 5, 4, 5, 6, 8, 8, 8, 6, 5, 4, 4, 4, 2, 3, 2, 1, 0, -2, -4, -7, -10, -12, -13, -13, -13, -13, -13, -13,
    -13, -12, -10, -9, -9, -7, -6, -4, -2, -1, 4, 4, 4, 4, 3, 3, 2, 1, 1, 0, 1, -1, -1, -1, -1, -2, -2, -2, -2, -3,
    -2, -2, -1, -1, 0, 1, 2, 2, 2, 1, 0, -1, -1, 5, 8, 9, 7, 7, 5, 5, 3, 3, 1, -1, -1, 1, 1, 1, 1, 1,
    2, 13, 23, 25, 25, 21, 17, 10, 5, 3, 2, 3, 5, 9, 12, 23, 25, 24, 28, 33, 42, 54, 75, 107, 108, 102, 89, 66, 48, 34,
    22, 12, 0, 1, 3, 14, 18, 18, 12, 7, 0, -7, -13, -18, -24, -29, -33, -36, -38, -40, -41, -42, -42, -41, -41, -40, -39, -37, -36, -34,
    -33, -31, -30, -28, -27, -25, -24, -22, -21, -19, -18, -16, -15, -14, -13, -12, -11, -11, -10, -9, -8, -8, -7, -7, -6, -6, -5, -5, -5, -4,
    -4, -4, -3, -3, -3, -3, -2, -2, -2, -2, -2, -2, -1, -1, -1, -1, -1, -1, -1, -1, -1, -1
];
const macdLayer = document.getElementById("macd");
macd.forEach((v, i) => {
    if (v === 0) return;
    add(macdLayer, "rect", { x: slotX(i) - 1, y: v > 0 ? 158 - v : 158, width: 2, height: Math.abs(v), fill: v > 0 ? "#cf433b" : GREEN });
});
```
